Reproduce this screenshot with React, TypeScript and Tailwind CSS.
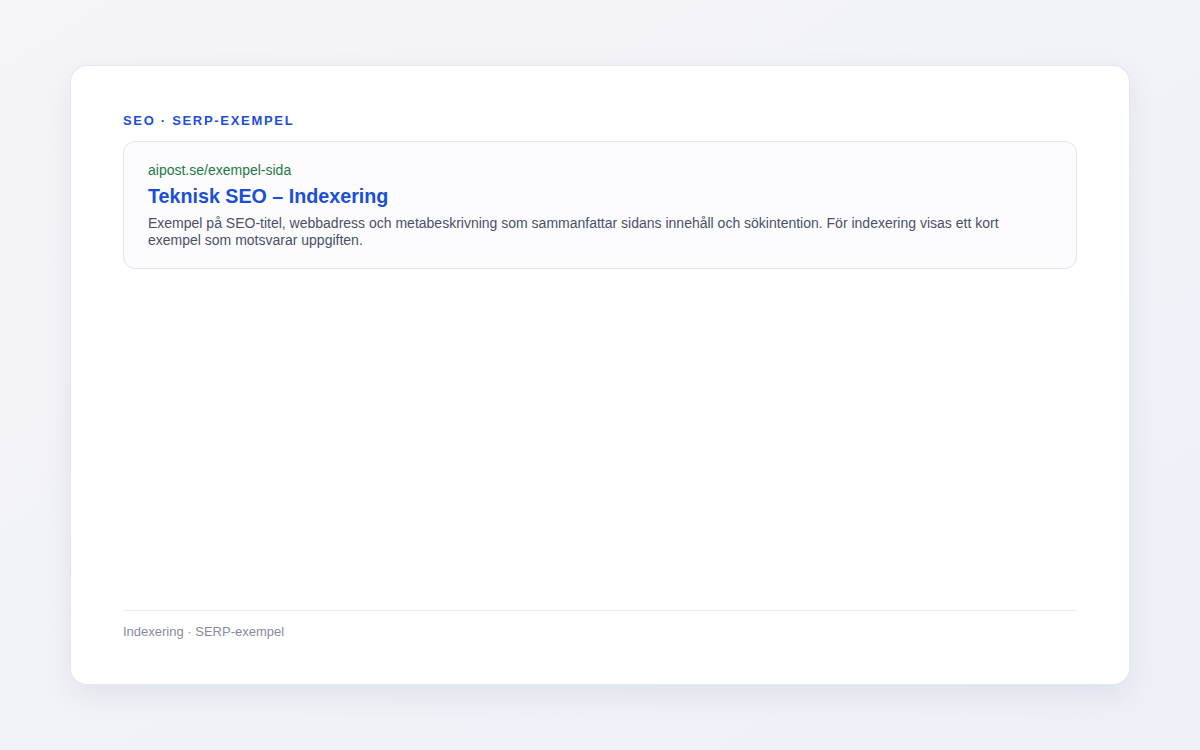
import React from "react";

export default function App() {
  return (
    <div
      className="w-[1200px] h-[750px] flex px-[71px] py-[66px] bg-gradient-to-br from-[#f5f5f8] to-[#eef0f8]"
      style={{ fontFamily: '"Liberation Sans", Arial, Helvetica, sans-serif' }}
    >
      <div className="flex-1 flex flex-col bg-white rounded-[16px] shadow-[0_0_0_1px_#e6e7ee,0_10px_30px_rgba(30,35,70,0.08)] px-[52px] pt-[47px] pb-[44px]">
        <div className="text-[13px] leading-[16px] font-bold tracking-[0.13em] uppercase text-[#1d4ed8]">
          SEO · SERP-exempel
        </div>
        <div className="mt-[12px] rounded-[12px] border border-[#e2e4ec] bg-[#fcfcfe] px-[24px] pt-[19px] pb-[19px]">
          <div className="text-[14px] leading-[18px] text-[#1e7a42]">aipost.se/exempel-sida</div>
          <div className="mt-[4px] text-[19.7px] leading-[26px] font-bold text-[#1a4fd6]">
            Teknisk SEO – Indexering
          </div>
          <div className="mt-[6px] text-[14px] leading-[17px] text-[#4a5068]">
            Exempel på SEO-titel, webbadress och metabeskrivning som sammanfattar sidans innehåll och sökintention. För indexering visas ett kort exempel som motsvarar uppgiften.
          </div>
        </div>
        <div className="mt-auto border-t border-[#ecedf3] pt-[13px] text-[13px] leading-[16px] text-[#868aa0]">
          Indexering · SERP-exempel
        </div>
      </div>
    </div>
  );
}
